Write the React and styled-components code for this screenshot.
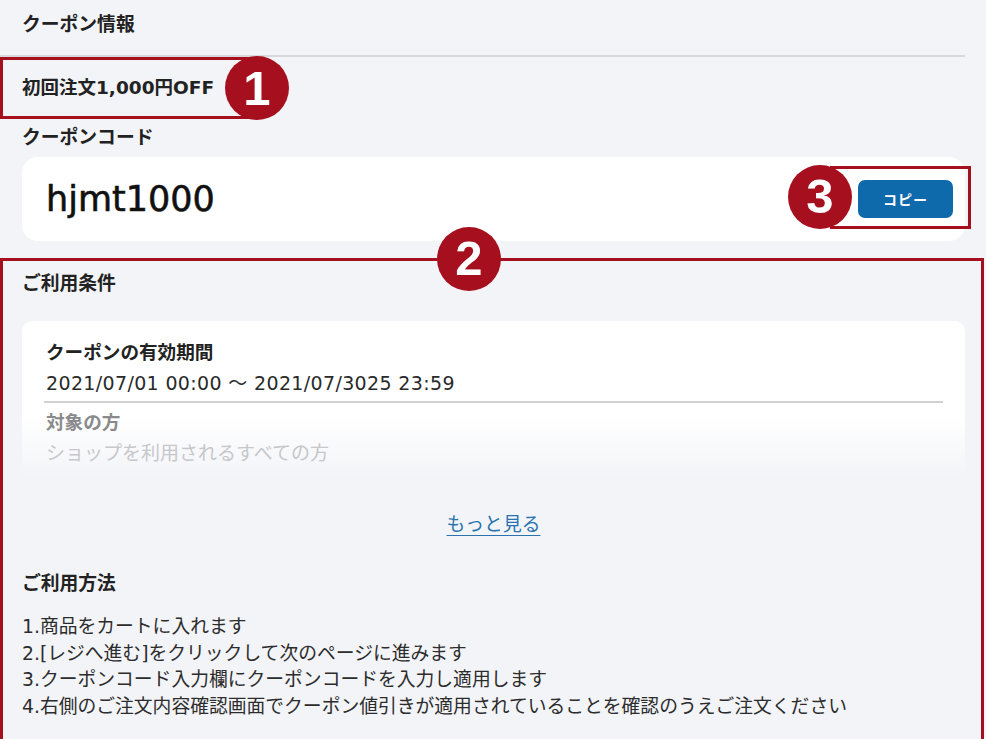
import React from 'react';
import styled, { createGlobalStyle } from 'styled-components';

const GlobalStyle = createGlobalStyle`
  html, body {
    margin: 0;
    padding: 0;
    background: #f3f4f8;
  }
  body {
    font-family: "DejaVu Sans", "Noto Sans CJK JP", sans-serif;
    color: #222;
    overflow: hidden;
  }
`;

const RED = '#a60f1d';
const BG = '#f3f4f8';

const Page = styled.div`
  width: 986px;
  height: 739px;
  box-sizing: border-box;
  padding: 0 21px 0 22px;
  display: flex;
  flex-direction: column;
  overflow: hidden;
`;

const Header = styled.div`
  margin-left: -22px;
  padding: 0 0 5px 22px;
  line-height: 50px;
  font-size: 18.8px;
  font-weight: 700;
  border-bottom: 2px solid #d8d9dd;
`;

const TitleRow = styled.div`
  position: relative;
  line-height: 61px;
  font-size: 18.5px;
  font-weight: 700;
`;

const Label = styled.div`
  line-height: ${(p) => p.$lh || 39}px;
  font-size: 18.8px;
  font-weight: 700;
  margin-top: ${(p) => p.$mt || 0}px;
`;

const CodeCard = styled.div`
  height: 84px;
  background: #fff;
  border-radius: 16px;
  display: flex;
  align-items: center;
  justify-content: space-between;
  padding: 0 12px 0 24px;
`;

const Code = styled.div`
  font-size: 35px;
  font-weight: 400;
  -webkit-text-stroke: 0.6px #111;
  color: #111;
`;

const CopyWrap = styled.div`
  position: relative;
  display: flex;
`;

const CopyButton = styled.button`
  width: 95px;
  height: 38px;
  border: 0;
  border-radius: 7px;
  background: #0e6aab;
  color: #fff;
  font-family: "Noto Sans CJK JP", sans-serif;
  font-size: 14px;
  font-weight: 700;
  letter-spacing: 1px;
`;

const Section = styled.div`
  position: relative;
  display: flex;
  flex-direction: column;
  margin-top: 17px;
  padding-bottom: 18px;
`;

const CondCard = styled.div`
  display: flex;
  flex-direction: column;
  margin-top: 11px;
  padding: 16px 24px 11px;
  border-radius: 10px;
  background: linear-gradient(to bottom, #fff 0%, #fff 60%, ${BG} 100%);
`;

const CondTitle = styled.div`
  line-height: 32px;
  font-size: 18.6px;
  font-weight: 700;
  color: ${(p) => p.$color || '#222'};
  padding-top: ${(p) => p.$pt || 0}px;
`;

const CondText = styled.div`
  line-height: 28px;
  font-size: 19px;
  letter-spacing: ${(p) => p.$spacing || 0}px;
  color: ${(p) => p.$color || '#2a2a2a'};
`;

const Divider = styled.div`
  margin: 4px -2px 0 -2px;
  height: 2px;
  background: #d0d1d4;
`;

const MoreLink = styled.a`
  align-self: center;
  margin-top: 32px;
  line-height: 30px;
  font-size: 18.8px;
  color: #2873b0;
  text-decoration: underline;
  text-underline-offset: 4px;
`;

const Steps = styled.ol`
  list-style: none;
  margin: 10px 0 0;
  padding: 0;
`;

const Step = styled.li`
  font-size: 18.8px;
  line-height: 26.8px;
  color: #2c2c2c;
  white-space: nowrap;
`;

const Frame = styled.div`
  position: absolute;
  top: ${(p) => p.$top}px;
  left: ${(p) => p.$left}px;
  right: ${(p) => p.$right}px;
  bottom: ${(p) => p.$bottom}px;
  width: ${(p) => (p.$width ? `${p.$width}px` : 'auto')};
  border: 3px solid ${RED};
  pointer-events: none;
`;

const Badge = styled.div`
  position: absolute;
  top: ${(p) => p.$top}px;
  left: ${(p) => p.$left}px;
  width: 64px;
  height: 64px;
  border-radius: 50%;
  background: ${RED};
  color: #fff;
  display: flex;
  align-items: center;
  justify-content: center;
  font-family: "Liberation Sans", Arial, sans-serif;
  font-weight: 700;
  font-size: 49px;
  line-height: 1;
`;

const steps = [
  '1.商品をカートに入れます',
  '2.[レジへ進む]をクリックして次のページに進みます',
  '3.クーポンコード入力欄にクーポンコードを入力し適用します',
  '4.右側のご注文内容確認画面でクーポン値引きが適用されていることを確認のうえご注文ください',
];

export default function App() {
  return (
    <>
      <GlobalStyle />
      <Page>
        <Header>クーポン情報</Header>

        <TitleRow>
          初回注文1,000円OFF
          <Frame $top={0} $left={-22} $bottom={-1} $width={250} />
          <Badge $top={-1} $left={203}>1</Badge>
        </TitleRow>

        <Label>クーポンコード</Label>
        <CodeCard>
          <Code>hjmt1000</Code>
          <CopyWrap>
            <CopyButton>コピー</CopyButton>
            <Frame $top={-14} $left={-28} $right={-18} $bottom={-11} />
            <Badge $top={-15} $left={-70}>3</Badge>
          </CopyWrap>
        </CodeCard>

        <Section>
          <Label $lh={52}>ご利用条件</Label>
          <CondCard>
            <CondTitle>クーポンの有効期間</CondTitle>
            <CondText $spacing={0.35}>2021/07/01 00:00 ～ 2021/07/3025 23:59</CondText>
            <Divider />
            <CondTitle $pt={4} $color="#8a8a8c">対象の方</CondTitle>
            <CondText $color="#c6c7ca">ショップを利用されるすべての方</CondText>
          </CondCard>
          <MoreLink>もっと見る</MoreLink>
          <Label $lh={40} $mt={24}>ご利用方法</Label>
          <Steps>
            {steps.map((s) => (
              <Step key={s}>{s}</Step>
            ))}
          </Steps>
          <Frame $top={0} $left={-22} $right={-19} $bottom={-3} />
          <Badge $top={-31} $left={415}>2</Badge>
        </Section>
      </Page>
    </>
  );
}
